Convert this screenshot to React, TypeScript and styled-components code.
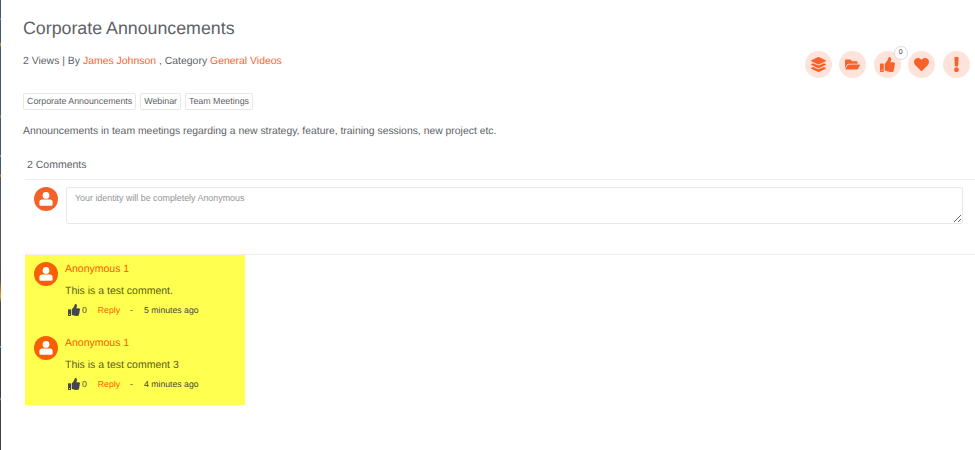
import React from 'react';
import styled, { createGlobalStyle } from 'styled-components';
import { FaLayerGroup, FaFolderOpen, FaThumbsUp, FaHeart, FaExclamation } from 'react-icons/fa';

const GlobalStyle = createGlobalStyle`
  html, body {
    margin: 0;
    padding: 0;
    background: #fff;
  }
  body {
    font-family: "Liberation Sans", Arial, sans-serif;
    color: #5d6267;
    text-rendering: geometricPrecision;
  }
`;

interface CommentData {
  name: string;
  text: string;
  time: string;
}

const comments: CommentData[] = [
  { name: 'Anonymous 1', text: 'This is a test comment.', time: '5 minutes ago' },
  { name: 'Anonymous 1', text: 'This is a test comment 3', time: '4 minutes ago' },
];

const tags = ['Corporate Announcements', 'Webinar', 'Team Meetings'];

const actions = [
  { key: 'layers', icon: <FaLayerGroup /> },
  { key: 'folder', icon: <FaFolderOpen /> },
  { key: 'like', icon: <FaThumbsUp />, count: 0 },
  { key: 'heart', icon: <FaHeart /> },
  { key: 'flag', icon: <FaExclamation /> },
];

const Avatar: React.FC = () => (
  <AvatarCircle>
    <svg width="16" height="16" viewBox="0 0 16 16" fill="currentColor">
      <circle cx="8" cy="4.4" r="3.4" />
      <path d="M4 8.4h8c1.6 0 2.6 1.1 2.6 2.6v2.2c0 1-.7 1.6-1.6 1.6H3c-.9 0-1.6-.6-1.6-1.6V11c0-1.5 1-2.6 2.6-2.6z" />
    </svg>
  </AvatarCircle>
);

const App: React.FC = () => {
  return (
    <Page>
      <GlobalStyle />
      <Title>Corporate Announcements</Title>
      <MetaRow>
        <Meta>
          2 Views | By <OrangeLink>James Johnson</OrangeLink> , Category <OrangeLink>General Videos</OrangeLink>
        </Meta>
        <Actions>
          {actions.map((a) => (
            <ActionButton key={a.key}>
              {a.icon}
              {a.count !== undefined && <Badge>{a.count}</Badge>}
            </ActionButton>
          ))}
        </Actions>
      </MetaRow>
      <Tags>
        {tags.map((t) => (
          <Tag key={t}>{t}</Tag>
        ))}
      </Tags>
      <Description>
        Announcements in team meetings regarding a new strategy, feature, training sessions, new project etc.
      </Description>
      <CommentsHeader>2 Comments</CommentsHeader>
      <CommentForm>
        <Avatar />
        <CommentInput placeholder="Your identity will be completely Anonymous" />
      </CommentForm>
      <CommentList>
        {comments.map((c) => (
          <Comment key={c.text}>
            <Avatar />
            <CommentBody>
              <CommentName>{c.name}</CommentName>
              <CommentText>{c.text}</CommentText>
              <CommentFooter>
                <FaThumbsUp />
                <LikeCount>0</LikeCount>
                <ReplyLink>Reply</ReplyLink>
                <span>-</span>
                <span>{c.time}</span>
              </CommentFooter>
            </CommentBody>
          </Comment>
        ))}
      </CommentList>
    </Page>
  );
};

const Page = styled.div`
  box-sizing: border-box;
  width: 975px;
  height: 450px;
  padding: 18px 0 0 22px;
  overflow: hidden;
  border-left: 1px solid;
  border-image: linear-gradient(
    180deg,
    #46586a 0,
    #46586a 19px,
    #7fc4d0 20px,
    #46586a 21px,
    #46586a 43px,
    #d9a020 45px,
    #46586a 48px,
    #46586a 115px,
    #c9802a 117px,
    #46586a 119px,
    #46586a 155px,
    #6fb8b0 156px,
    #46586a 158px,
    #46586a 174px,
    #e08a2a 176px,
    #46586a 178px,
    #56505a 250px,
    #5a4c4a 280px,
    #e0a020 296px,
    #44464e 303px,
    #44464e 345px,
    #6fc0d0 346px,
    #3d4048 348px,
    #3d4048 397px,
    #6fb0c0 398px,
    #3d4048 400px,
    #3d4048 100%
  ) 1;
`;

const Title = styled.h1`
  margin: 0;
  font-size: 17.8px;
  line-height: 20px;
  font-weight: 400;
  color: #5d6267;
`;

const MetaRow = styled.div`
  display: flex;
  justify-content: space-between;
  align-items: flex-start;
  margin-top: 14px;
  height: 39px;
`;

const Meta = styled.div`
  font-size: 10.45px;
  line-height: 20px;
`;

const OrangeLink = styled.span`
  color: #f4652f;
`;

const Actions = styled.div`
  display: flex;
  gap: 7.6px;
  margin: -1px 5px 0 0;
`;

const ActionButton = styled.div`
  position: relative;
  width: 27px;
  height: 27px;
  border-radius: 50%;
  background: #fde3d9;
  color: #f8622a;
  display: flex;
  align-items: center;
  justify-content: center;
  font-size: 15px;
`;

const Badge = styled.span`
  position: absolute;
  top: -5px;
  right: -7px;
  width: 12px;
  height: 12px;
  border: 1px solid #ddd;
  border-radius: 50%;
  background: #fff;
  color: #444;
  font-size: 7px;
  line-height: 12px;
  text-align: center;
`;

const Tags = styled.div`
  display: flex;
  gap: 4px;
  margin-top: 2px;
`;

const Tag = styled.span`
  border: 1px solid #e8e8e8;
  border-radius: 2px;
  padding: 0 3px;
  font-size: 8.85px;
  line-height: 15px;
  color: #5d6267;
`;

const Description = styled.p`
  margin: 15px 0 0;
  font-size: 10.4px;
  line-height: 14px;
`;

const CommentsHeader = styled.div`
  margin: 19px 0 0 4px;
  font-size: 10.5px;
  line-height: 14px;
`;

const CommentForm = styled.div`
  display: flex;
  gap: 8px;
  margin: 7px 0 0 2px;
  padding: 7px 12px 30px 9px;
  border-top: 1px solid #eee;
  border-bottom: 1px solid #eee;
`;

const AvatarCircle = styled.div`
  flex: none;
  width: 24px;
  height: 24px;
  border-radius: 50%;
  background: #f4622a;
  color: #fff;
  display: flex;
  align-items: center;
  justify-content: center;
`;

const CommentInput = styled.textarea`
  box-sizing: border-box;
  flex: 1;
  height: 37px;
  padding: 5px 8px;
  border: 1px solid #e8e8e8;
  border-radius: 2px;
  font-family: "Liberation Sans", Arial, sans-serif;
  font-size: 8.9px;
  &::placeholder {
    color: #8f959b;
  }
`;

const CommentList = styled.div`
  box-sizing: border-box;
  width: 220px;
  height: 150px;
  margin-left: 2px;
  padding: 7px 9px 0;
  background: #ffff50;
  display: flex;
  flex-direction: column;
  gap: 19px;
  color: #5c5e22;

  ${AvatarCircle} {
    background: #f75f00;
  }
`;

const Comment = styled.div`
  display: flex;
  gap: 7px;
`;

const CommentBody = styled.div`
  display: flex;
  flex-direction: column;
`;

const CommentName = styled.div`
  font-size: 10.5px;
  line-height: 14px;
  color: #f95d00;
`;

const CommentText = styled.div`
  margin-top: 8px;
  font-size: 10.5px;
  line-height: 14px;
`;

const CommentFooter = styled.div`
  display: flex;
  align-items: center;
  margin: 5px 0 0 3px;
  font-size: 8.7px;
  line-height: 14px;
  color: #46483a;

  svg {
    font-size: 12px;
    color: #46484f;
  }
`;

const LikeCount = styled.span`
  margin: 0 11px 0 2px;
`;

const ReplyLink = styled.span`
  color: #f95d00;
  margin-right: 10px;

  & + span {
    margin-right: 11px;
  }
`;

export default App;
